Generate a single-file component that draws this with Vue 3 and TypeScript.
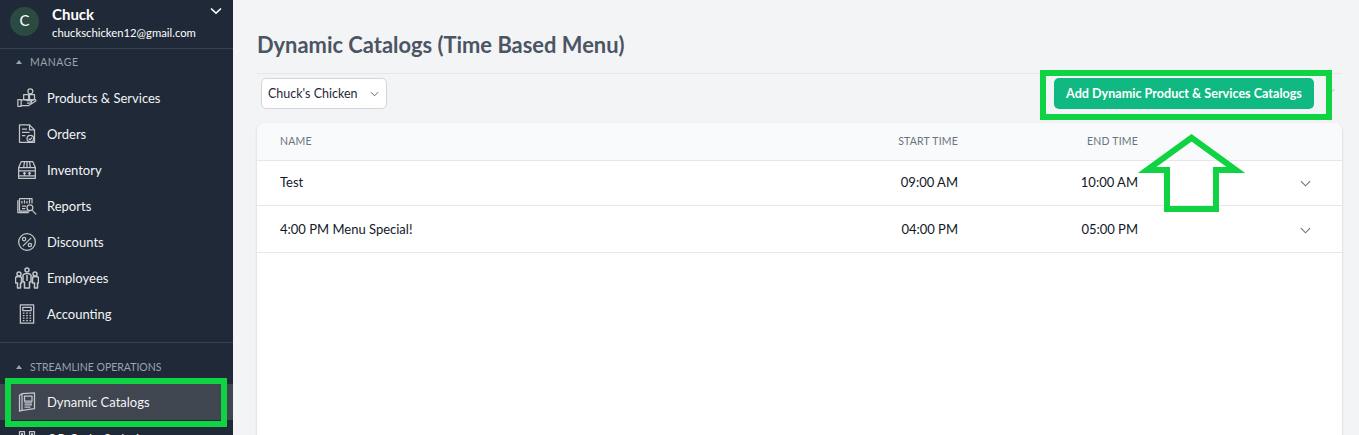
<template>
  <div class="page">
    <aside class="sidebar">
      <div class="account">
        <div class="avatar">C</div>
        <div class="who">
          <div class="who-name">Chuck</div>
          <div class="who-mail">chuckschicken12@gmail.com</div>
        </div>
        <svg class="account-chev" viewBox="0 0 12 8"><path d="M1 1.500 6 6.200 11 1.500" /></svg>
      </div>

      <div class="section-label first"><span class="caret"></span>MANAGE</div>
      <a v-for="item in manage" :key="item.label" class="nav-item">
        <svg class="nav-icon" :class="{ wide: item.wide }" viewBox="0 0 24 24">
          <path v-for="d in item.paths" :key="d" :d="d" />
        </svg>
        <span>{{ item.label }}</span>
      </a>

      <div class="side-divider"></div>

      <div class="section-label"><span class="caret"></span>STREAMLINE OPERATIONS</div>
      <a v-for="item in streamline" :key="item.label" class="nav-item" :class="{ active: item.active }">
        <svg class="nav-icon" viewBox="0 0 24 24">
          <path v-for="d in item.paths" :key="d" :d="d" />
        </svg>
        <span>{{ item.label }}</span>
      </a>
    </aside>

    <main class="content">
      <h1 class="title">Dynamic Catalogs (Time Based Menu)</h1>
      <div class="toolbar">
        <div class="select">
          <span>Chuck's Chicken</span>
          <svg class="select-chev" viewBox="0 0 10 6"><path d="M1 1 5 5 9 1" /></svg>
        </div>
        <button class="add-btn">Add Dynamic Product &amp; Services Catalogs</button>
        <svg class="tool-chev" viewBox="0 0 10 6"><path d="M1 1 5 5 9 1" /></svg>
      </div>

      <section class="card">
        <div class="row head">
          <div>NAME</div>
          <div class="right">START TIME</div>
          <div class="right">END TIME</div>
          <div></div>
        </div>
        <div v-for="row in rows" :key="row.name" class="row body" :class="row.cls">
          <div>{{ row.name }}</div>
          <div class="right">{{ row.start }}</div>
          <div class="right">{{ row.end }}</div>
          <svg class="row-chev" viewBox="0 0 12 7"><path d="M1 1 6 6 11 1" /></svg>
        </div>
      </section>
    </main>

    <!-- annotations drawn on top of the screenshot -->
    <div class="mark mark-nav"></div>
    <div class="mark mark-btn"></div>
    <svg class="mark-arrow" viewBox="0 0 115 85">
      <path d="M56.500 7.700 12 40H32V79H81V40H101Z" />
    </svg>
  </div>
</template>

<script setup lang="ts">
interface NavItem {
  label: string
  paths: string[]
  active?: boolean
  wide?: boolean
}

const manage: NavItem[] = [
  {
    label: 'Products & Services',
    paths: [
      'M13 4a3 3 0 1 0 6 0a3 3 0 1 0-6 0',
      'M8 8h6v6H8zM15 8h6v6h-6z',
      'M1 14h4v8H1z',
      'M5 15c3-2 5-1 7 0h4c2 0 2 3 0 3h-4',
      'M5 21h9l8-5c1.500-1 0-3-2-2l-4 2',
    ],
  },
  {
    label: 'Orders',
    paths: [
      'M3 1h12l6 6v15H3z',
      'M15 1v6h6',
      'M6 6h6M6 10h9M6 14h4',
      'M12 17.500a4 4 0 1 0 8 0a4 4 0 1 0-8 0M14 17.500l1.500 1.500 2.500-2.500',
    ],
  },
  {
    label: 'Inventory',
    paths: [
      'M2 9V22H22V9',
      'M5 2H19L22 9H2z',
      'M9 2 8 9M15 2l1 7M12 2v7',
      'M2 13h20M2 19h20',
      'M9 19v-4M7.500 16.500 9 15l1.500 1.500M15 19v-4M13.500 16.500 15 15l1.500 1.500',
    ],
  },
  {
    label: 'Reports',
    paths: [
      'M3 3v15h12M3 3h15v6M1 5v15h13',
      'M6 6v3M9 5v4M12 6v3M15 4v5',
      'M6 12h5M6 15h4',
      'M12 14a3.500 3.500 0 1 0 7 0a3.500 3.500 0 1 0-7 0M18 17l5 5',
    ],
  },
  {
    label: 'Discounts',
    paths: [
      'M2 12a10 10 0 1 0 20 0a10 10 0 1 0-20 0',
      'M7 17 17 7',
      'M6.500 8.500a2 2 0 1 0 4 0a2 2 0 1 0-4 0M13.500 15.500a2 2 0 1 0 4 0a2 2 0 1 0-4 0',
    ],
  },
  {
    label: 'Employees',
    wide: true,
    paths: [
      'M10 4a2 2 0 1 0 4 0a2 2 0 1 0-4 0M2 8a2 2 0 1 0 4 0a2 2 0 1 0-4 0M18 8a2 2 0 1 0 4 0a2 2 0 1 0-4 0',
      'M8 9c1-2 7-2 8 0v7h-1.500v6h-5v-6H8z',
      'M.5 12c0-2 6-2 6 0v5H5.500v5h-3v-5H.5zM17.500 12c0-2 6-2 6 0v5h-1v5h-3v-5h-2z',
      'M12 9v6',
    ],
  },
  {
    label: 'Accounting',
    paths: [
      'M4 1h16v22H4z',
      'M7 4h10v4H7z',
      'M7 11h2M11 11h2M15 11h2M7 14h2M11 14h2M15 14h2M7 17h2M11 17h2M15 17h2M7 20h2M11 20h2M15 20h2',
    ],
  },
]

const streamline: NavItem[] = [
  {
    label: 'Dynamic Catalogs',
    active: true,
    paths: [
      'M6 2 21 1V20L6 22z',
      'M6 2 3 4V23L6 22',
      'M9 5h9v6H9z',
      'M9 13h9M9 15.500h9M9 18h7',
    ],
  },
  {
    label: 'QR Code Ordering',
    paths: [
      'M3 3h6v6H3zM15 3h6v6h-6zM3 15h6v6H3z',
      'M5.500 5.500h1v1h-1zM17.500 5.500h1v1h-1zM5.500 17.500h1v1h-1z',
      'M13 13h3v3h-3zM18 13h3v3h-3zM13 18h3v3h-3zM18 18h3v3h-3z',
    ],
  },
]

const rows = [
  { name: 'Test', start: '09:00 AM', end: '10:00 AM', cls: 'short' },
  { name: '4:00 PM Menu Special!', start: '04:00 PM', end: '05:00 PM', cls: 'tall' },
]
</script>

<style>
html,
body {
  margin: 0;
  height: 100%;
  overflow: hidden;
  background: #f3f4f6;
}
</style>

<style scoped>
.page {
  position: relative;
  display: flex;
  width: 1359px;
  height: 435px;
  overflow: hidden;
  background: #f3f4f6;
  font-family: Lato, "Noto Sans", sans-serif;
  color: #111827;
}

.sidebar {
  flex: 0 0 233px;
  background: #1f2937;
  color: #f9fafb;
}

.account {
  position: relative;
  display: flex;
  align-items: flex-start;
  gap: 13px;
  height: 49px;
  padding: 5px 0 0 10px;
  box-sizing: border-box;
  border-bottom: 1px solid #374151;
}

.avatar {
  flex: none;
  width: 29px;
  height: 29px;
  margin-top: 2px;
  border-radius: 50%;
  background: #2a4a42;
  color: #fff;
  font-size: 15px;
  line-height: 27px;
  text-align: center;
}

.who-name {
  font-size: 15px;
  font-weight: 700;
  line-height: 18px;
  color: #fff;
}

.who-mail {
  margin-top: 2px;
  font-size: 11.300px;
  line-height: 15px;
  color: #fff;
}

.account-chev {
  position: absolute;
  top: 7px;
  right: 11px;
  width: 12px;
  height: 8px;
  fill: none;
  stroke: #fff;
  stroke-width: 1.600;
}

.section-label {
  display: flex;
  align-items: center;
  height: 16px;
  margin-top: 16px;
  padding-left: 16px;
  font-size: 10.500px;
  color: #9ca3af;
}

.section-label.first {
  margin: 5px 0 10px;
  letter-spacing: 0.5px;
}

.caret {
  width: 0;
  height: 0;
  margin-right: 8px;
  border-left: 3px solid transparent;
  border-right: 3px solid transparent;
  border-bottom: 4px solid #9ca3af;
}

.nav-item {
  display: flex;
  align-items: center;
  gap: 10px;
  height: 36px;
  padding-left: 17px;
  font-size: 13px;
  color: #f3f4f6;
}

.nav-item.active {
  margin-top: 9px;
  margin-bottom: 1px;
  background: #3f4650;
}

.nav-icon {
  flex: none;
  width: 20px;
  height: 20px;
  fill: none;
  stroke: #c4c7cb;
  stroke-width: 1.500;
  stroke-linejoin: round;
}

.nav-icon.wide {
  width: 24px;
  height: 24px;
  margin: 0 -2px;
}

.side-divider {
  height: 1px;
  margin-top: 10px;
  background: #374151;
}

.content {
  flex: 1;
  min-width: 0;
  padding: 0 17px 0 24px;
}

.title {
  margin: 32px 0 0;
  height: 41px;
  font-size: 21.900px;
  font-weight: 700;
  line-height: 26px;
  color: #4b5563;
  border-bottom: 1px solid #e5e7eb;
}

.toolbar {
  position: relative;
  display: flex;
  align-items: flex-start;
  justify-content: space-between;
  height: 49px;
  padding: 4px 28px 0 4px;
  box-sizing: border-box;
}

.select {
  display: flex;
  align-items: center;
  justify-content: space-between;
  width: 126px;
  height: 31px;
  padding: 0 6px;
  box-sizing: border-box;
  background: #fff;
  border: 1px solid #d1d5db;
  border-radius: 5px;
  font-size: 12.500px;
  color: #1f2937;
}

.select-chev {
  width: 9px;
  height: 6px;
  margin-right: 1px;
  fill: none;
  stroke: #4b5563;
  stroke-width: 1;
}

.add-btn {
  width: 260px;
  height: 31px;
  padding: 0;
  border: 0;
  border-radius: 5px;
  background: #10b981;
  color: #fff;
  font: 700 12.600px Lato, "Noto Sans", sans-serif;
}

.tool-chev {
  position: absolute;
  top: 14px;
  right: 7px;
  width: 9px;
  height: 6px;
  fill: none;
  stroke: #9ca3af;
  stroke-width: 1;
}

.card {
  height: 400px;
  background: #fff;
  border-radius: 8px 8px 0 0;
  box-shadow: 0 1px 3px rgba(0, 0, 0, 0.15);
  overflow: hidden;
}

.row {
  display: grid;
  grid-template-columns: 1fr 120px 180px 204px;
  align-items: center;
  padding-left: 23px;
  border-bottom: 1px solid #e5e7eb;
  box-sizing: border-box;
}

.head {
  height: 38px;
  padding-bottom: 1px;
  background: #f9fafb;
  font-size: 10.500px;
  letter-spacing: 0.2px;
  color: #6b7280;
}

.body {
  font-size: 13px;
  color: #111827;
}

.short {
  height: 45px;
}

.short > div {
  margin-bottom: 3px;
}

.tall {
  height: 47px;
}

.right {
  text-align: right;
}

.row-chev {
  justify-self: end;
  width: 11px;
  height: 7px;
  margin-right: 31px;
  margin-top: 3px;
  fill: none;
  stroke: #6b7280;
  stroke-width: 1.200;
}

.short .row-chev {
  margin-top: 1px;
}

.mark {
  position: absolute;
  box-sizing: border-box;
  border: 6px solid #10d343;
}

.mark-nav {
  left: 5px;
  top: 378px;
  width: 222px;
  height: 49px;
}

.mark-btn {
  left: 1040px;
  top: 70px;
  width: 292px;
  height: 50px;
}

.mark-arrow {
  position: absolute;
  left: 1135px;
  top: 130px;
  width: 115px;
  height: 85px;
  fill: none;
  stroke: #10d343;
  stroke-width: 6;
  stroke-miterlimit: 10;
}
</style>
